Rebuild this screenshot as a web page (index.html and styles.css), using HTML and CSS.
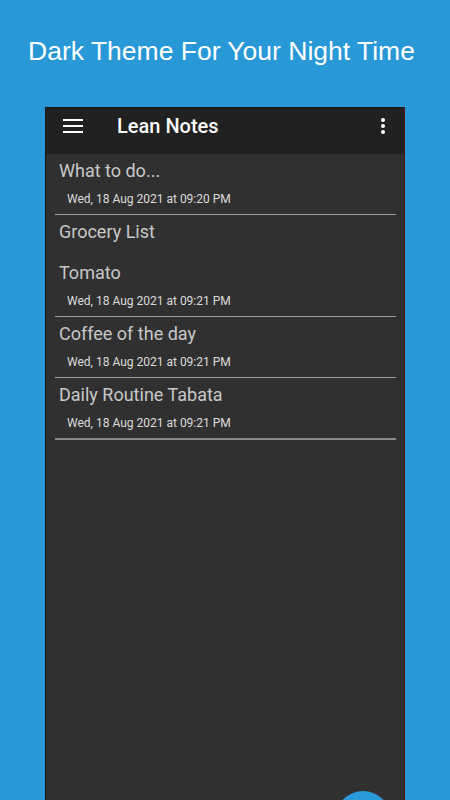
FILE: index.html
```html
<!DOCTYPE html>
<html lang="en">
<head>
    <meta charset="UTF-8">
    <meta name="viewport" content="width=device-width, initial-scale=1.0">
    <title>Lean Notes - Dark Theme</title>
    <link rel="stylesheet" href="styles.css">
</head>
<body>

<h1 class="banner">Dark Theme For Your Night Time</h1>

<div class="phone">
    <div class="toolbar">
        <svg class="menu-icon" width="20" height="14" viewBox="0 0 20 14">
            <rect x="0" y="0" width="20" height="2" fill="#fff"/>
            <rect x="0" y="6" width="20" height="2" fill="#fff"/>
            <rect x="0" y="12" width="20" height="2" fill="#fff"/>
        </svg>
        <span class="app-title">Lean Notes</span>
        <svg class="more-icon" width="6" height="16" viewBox="0 0 6 16">
            <circle cx="3" cy="2" r="2" fill="#fff"/>
            <circle cx="3" cy="8" r="2" fill="#fff"/>
            <circle cx="3" cy="14" r="2" fill="#fff"/>
        </svg>
    </div>

    <ul class="notes">
        <li class="note">
            <div class="note-title">What to do...</div>
            <div class="note-date">Wed, 18 Aug 2021 at 09:20 PM</div>
        </li>
        <li class="note">
            <div class="note-title">Grocery List<br><br>Tomato</div>
            <div class="note-date">Wed, 18 Aug 2021 at 09:21 PM</div>
        </li>
        <li class="note">
            <div class="note-title">Coffee of the day</div>
            <div class="note-date">Wed, 18 Aug 2021 at 09:21 PM</div>
        </li>
        <li class="note last">
            <div class="note-title">Daily Routine Tabata</div>
            <div class="note-date">Wed, 18 Aug 2021 at 09:21 PM</div>
        </li>
    </ul>

    <div class="fab"></div>
</div>

</body>
</html>
```

FILE: styles.css
```css
body {
    margin: 0;
    background-color: #2899d6;
    overflow: hidden;
    height: 800px;
}
.banner {
    margin: 0;
    height: 107px;
    padding: 34px 7px 0 0;
    box-sizing: border-box;
    text-align: center;
    font-family: "Liberation Sans", Arial, sans-serif;
    font-weight: normal;
    font-size: 26.5px;
    line-height: 34px;
    color: #fff;
}
.phone {
    position: relative;
    width: 360px;
    height: 720px;
    margin: 0 auto;
    box-sizing: border-box;
    background-color: #303030;
    border-top: 1px solid #151515;
    border-left: 1px solid #151515;
    border-right: 1px solid #5a1414;
    font-family: Roboto, "Noto Sans", sans-serif;
    overflow: hidden;
}
.toolbar {
    display: flex;
    align-items: center;
    height: 46px;
    box-sizing: border-box;
    background-color: #212121;
    padding: 0 18px 10px 17px;
}
.menu-icon {
    flex: none;
}
.app-title {
    flex: 1;
    margin-left: 34px;
    font-size: 20px;
    font-weight: 500;
    color: #fff;
}
.more-icon {
    flex: none;
}
.notes {
    list-style: none;
    margin: 0 8px 0 9px;
    padding: 0;
}
.note {
    padding: 7px 0 7.5px;
    border-bottom: 1px solid #a0a0a0;
}
.note.last {
    border-bottom: 2px solid #8a8a8a;
}
.note-title {
    padding-left: 4px;
    font-size: 18px;
    line-height: 20.5px;
    color: #c8c8c8;
}
.note-date {
    margin-top: 9px;
    padding-left: 12px;
    font-size: 12px;
    line-height: 16px;
    color: #dcdcdc;
}
.fab {
    position: absolute;
    left: 289px;
    top: 683px;
    width: 56px;
    height: 56px;
    border-radius: 50%;
    background-color: #2a9bd8;
}
```
